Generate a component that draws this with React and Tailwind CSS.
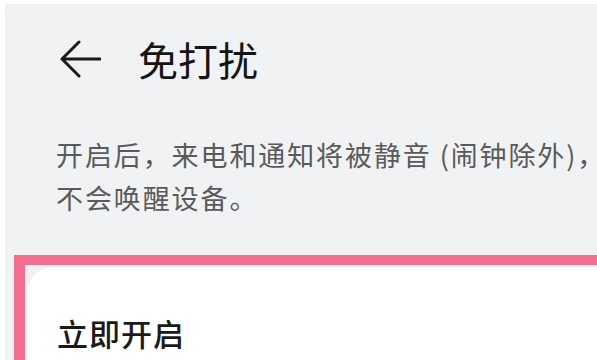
const BackArrow = () => (
  <svg width="42" height="38" viewBox="0 0 42 38" fill="none">
    <path
      d="M41 19H3M20 2L3 19L20 36"
      stroke="#1a1a1a"
      strokeWidth="3"
      strokeLinecap="round"
      strokeLinejoin="round"
    />
  </svg>
);

const App = () => {
  return (
    <div
      className="w-[597px] h-[360px] bg-white pt-[4px] pl-[5px] overflow-hidden"
      style={{ fontFamily: '"Noto Sans CJK SC", "Noto Sans", sans-serif' }}
    >
      <div className="h-full bg-[#f1f2f4] flex flex-col">
        <div className="h-[110px] flex items-center pl-[54px]">
          <BackArrow />
          <h1 className="ml-[37px] text-[40px] leading-none font-normal text-[#141414]">
            免打扰
          </h1>
        </div>

        <p className="mt-[20px] pl-[51px] w-max text-[27px] leading-[42.5px] tracking-[1.9px] text-[#5a5a5a] whitespace-nowrap">
          开启后，来电和通知将被静音 (闹钟除外)，
          <br />
          不会唤醒设备。
        </p>

        <div className="mt-[36px] ml-[9px] flex-1 border-t-[10px] border-l-[11px] border-[#f26d90] bg-[#eef0f2] pt-[2px] pl-[2px]">
          <div className="h-full bg-white rounded-tl-[26px] pt-[50px] pl-[30px]">
            <h2 className="text-[31px] leading-none font-medium tracking-[1px] text-[#1a1a1a]">
              立即开启
            </h2>
          </div>
        </div>
      </div>
    </div>
  );
};

export default App;
